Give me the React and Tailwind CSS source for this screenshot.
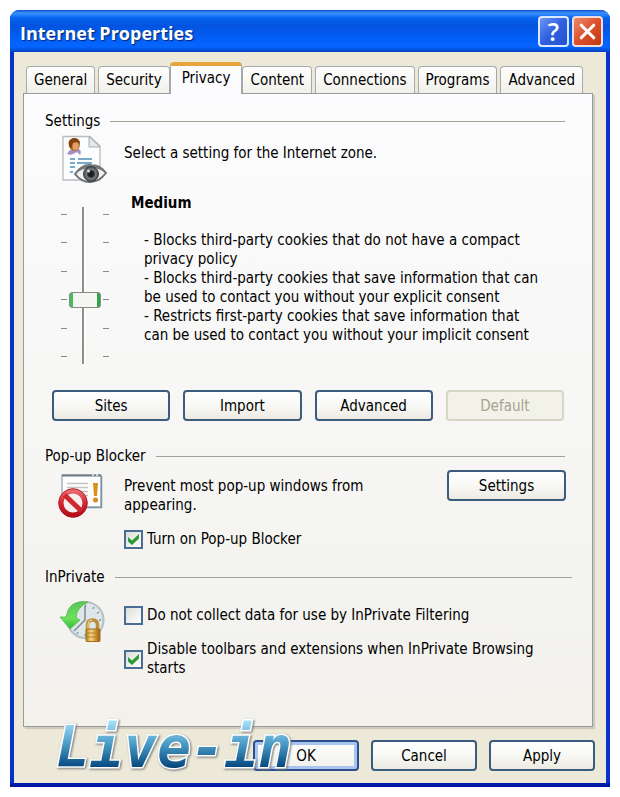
import { useState } from "react";
import { X } from "lucide-react";

const tabs = ["General", "Security", "Privacy", "Content", "Connections", "Programs", "Advanced"];

const ticks = [0, 1, 2, 3, 4, 5];

function XpButton({ children, className = "", isDefault, ...props }) {
  return (
    <button
      type="button"
      className={`h-[31px] rounded-[4px] border-2 text-center leading-5 disabled:border-[#d6d5c6] disabled:bg-none disabled:bg-[#f3f2e8] disabled:text-[#a5a493] ${
        isDefault
          ? "border-[#2c4f8c] bg-linear-to-b from-white to-[#f0f0ea] shadow-[inset_0_0_0_3px_#a9c4f0]"
          : "border-[#3b5c7c] bg-linear-to-b from-white via-[#f8f8f5] to-[#eceae2]"
      } ${className}`}
      {...props}
    >
      {children}
    </button>
  );
}

function GroupTitle({ children, className = "" }) {
  return (
    <div className={`flex items-center gap-[10px] ${className}`}>
      <h2 className="leading-5">{children}</h2>
      <div className="h-px flex-1 bg-[#a3a297]" />
    </div>
  );
}

function CheckRow({ id, checked, onChange, className = "", children }) {
  return (
    <div className={`flex items-center gap-1 ${className}`}>
      <span className="grid shrink-0">
        <input
          id={id}
          type="checkbox"
          checked={checked}
          onChange={onChange}
          className="peer col-start-1 row-start-1 size-[19px] appearance-none border-2 border-[#4a6d96] bg-linear-to-br from-[#dcdcd7] to-white"
        />
        <svg
          viewBox="0 0 19 19"
          className="pointer-events-none invisible col-start-1 row-start-1 size-[19px] peer-checked:visible"
        >
          <path d="M4 7 L8 10.500 L15 4 V8.500 L8 15 L4 11.500 Z" fill="#2b9b35" />
        </svg>
      </span>
      <label htmlFor={id} className="leading-[19px]">
        {children}
      </label>
    </div>
  );
}

function PrivacyIcon() {
  return (
    <svg viewBox="0 0 46 49" className="h-[49px] w-[46px]" aria-hidden="true">
      <defs>
        <radialGradient id="iris">
          <stop offset="0" stopColor="#111" />
          <stop offset="0.45" stopColor="#2b2d2f" />
          <stop offset="0.6" stopColor="#7b7f82" />
          <stop offset="1" stopColor="#44484b" />
        </radialGradient>
      </defs>
      <path d="M2 1.500 H29 L39 11 V45 H2 Z" fill="#fcfdfe" stroke="#b9bcc1" strokeWidth="1.300" />
      <path d="M28 1.500 V12 H39 Z" fill="#e5e7e9" stroke="#a9acb0" />
      <path d="M6 19 Q8 15 11 14 L18 14 Q21 16 19 20 Q16 16 14 18 Q10 21 6 19 Z" fill="#a78fc4" />
      <ellipse cx="13.500" cy="9.500" rx="5.500" ry="6.500" fill="#b0702c" />
      <ellipse cx="14.500" cy="11" rx="3" ry="4" fill="#dfa168" />
      <path d="M8 11 Q6 4 13 3 Q19 3 19 9 L16 7 L12 8 L10 14 Z" fill="#84400f" />
      <path
        d="M9 24 H14 M17 24 H31 M9 28 H14 M16 28 H31 M9 32 H14 M9 37 H12"
        stroke="#4e8dbd"
        strokeWidth="1.500"
      />
      <path d="M14 39 Q21 29 30 30 Q39 30 45 38 Q38 47 29 47 Q20 47 14 39 Z" fill="#f1f1ef" stroke="#6b6e70" strokeWidth="2" />
      <path d="M14 39 Q21 29 30 30 Q39 30 45 38 Q38 33 30 33 Q21 33 14 39 Z" fill="#777a7b" />
      <circle cx="30" cy="39" r="7.500" fill="url(#iris)" stroke="#3c3f41" />
      <circle cx="27.500" cy="36" r="1.500" fill="#d7dbdd" />
    </svg>
  );
}

function PopupIcon() {
  return (
    <svg viewBox="0 0 46 44" className="h-[44px] w-[46px]" aria-hidden="true">
      <defs>
        <linearGradient id="ban" x1="0" y1="0" x2="0" y2="1">
          <stop offset="0" stopColor="#e86a6e" />
          <stop offset="0.5" stopColor="#d42730" />
          <stop offset="1" stopColor="#b50d18" />
        </linearGradient>
      </defs>
      <rect x="4" y="1" width="39" height="32" fill="#fdfdfc" stroke="#a7b1bd" strokeWidth="1.500" />
      <path d="M4 1.500 H43" stroke="#6f7a87" strokeWidth="2" />
      <path d="M34 1 H36 M38 1 H40" stroke="#e8edf2" strokeWidth="1.500" />
      <path d="M43.500 2 V33.500 H26" fill="none" stroke="#7d92a5" strokeWidth="1.500" />
      <path d="M9 9.500 H30 M9 13.500 H30 M9 17.500 H30 M22 21.500 H30" stroke="#c3c4c5" strokeWidth="1.300" />
      <path d="M35 9 H40 L39 22 H36 Z" fill="#dc8d20" />
      <circle cx="37.500" cy="26" r="2.500" fill="#d88921" />
      <circle cx="15" cy="29" r="12" fill="#f5efee" stroke="url(#ban)" strokeWidth="5" />
      <path d="M6.500 21 L23.500 37" stroke="#cf2630" strokeWidth="5" />
      <circle cx="15" cy="29" r="14.300" fill="none" stroke="#a31822" strokeWidth="0.800" />
    </svg>
  );
}

function InPrivateIcon() {
  return (
    <svg viewBox="0 0 48 44" className="h-[44px] w-[48px]" aria-hidden="true">
      <defs>
        <linearGradient id="arrow" x1="0" y1="0" x2="0" y2="1">
          <stop offset="0" stopColor="#5dc35a" />
          <stop offset="0.6" stopColor="#6be35b" />
          <stop offset="1" stopColor="#38b53b" />
        </linearGradient>
        <linearGradient id="brass" x1="0" y1="0" x2="1" y2="0">
          <stop offset="0" stopColor="#b27a1b" />
          <stop offset="0.35" stopColor="#f5d888" />
          <stop offset="0.7" stopColor="#cf9230" />
          <stop offset="1" stopColor="#96620f" />
        </linearGradient>
      </defs>
      <circle cx="26.500" cy="20" r="18" fill="#dfe6ea" stroke="#b4bfc6" strokeWidth="2" />
      <path d="M26 6 V20 L15 31" fill="none" stroke="#7c8a93" strokeWidth="1.500" />
      <path
        d="M26.500 4.500 V7 M35 7 L34 9 M40 12 L38 13.500 M42 20 H40 M18 34 L19 32 M26 36 V34"
        stroke="#7d929f"
        strokeWidth="1.300"
      />
      <path
        d="M29 2 Q10 -1 7 17 L1 17 L11 29 L21 20 L17 18 Q17 8 29 2 Z"
        fill="url(#arrow)"
        stroke="#55b94f"
        strokeWidth="0.800"
      />
      <path d="M28.500 30 V25 Q28.500 20 33.500 20 Q38.500 20 38.500 25 V30" fill="none" stroke="#b98e36" strokeWidth="3.500" />
      <path d="M29 30 V25 Q29 20 33.500 20" fill="none" stroke="#efd99b" strokeWidth="1.200" />
      <rect x="27" y="29" width="14" height="12.500" rx="1" fill="url(#brass)" stroke="#a16d19" />
      <path d="M27 33 H41 M27 37 H41" stroke="#a87826" strokeWidth="0.800" />
    </svg>
  );
}

function TickColumn() {
  return (
    <div className="flex flex-col justify-between py-[7px]">
      {ticks.map((t) => (
        <span key={t} className="h-px w-[6px] bg-[#8b8b84]" />
      ))}
    </div>
  );
}

function LevelSlider({ level, onChange }) {
  return (
    <div className="flex h-[157px] gap-[2px]">
      <TickColumn />
      <input
        type="range"
        min="0"
        max="5"
        value={level}
        onChange={onChange}
        aria-label="Privacy level"
        className="m-0 h-[157px] w-[32px] appearance-none bg-transparent bg-[linear-gradient(90deg,#8f8f89_50%,#fff_50%)] bg-[length:4px_100%] bg-[position:13px_0px] bg-no-repeat [direction:rtl] [writing-mode:vertical-lr] [&::-webkit-slider-thumb]:h-[16px] [&::-webkit-slider-thumb]:w-[32px] [&::-webkit-slider-thumb]:appearance-none [&::-webkit-slider-thumb]:rounded-[3px] [&::-webkit-slider-thumb]:border [&::-webkit-slider-thumb]:border-[#858f88] [&::-webkit-slider-thumb]:bg-[linear-gradient(90deg,#46bc5c_3px,#f5f5f1_3px,#f5f5f1_27px,#2fa545_27px)]"
      />
      <TickColumn />
    </div>
  );
}

function Watermark() {
  return (
    <svg
      viewBox="0 0 270 80"
      className="pointer-events-none absolute bottom-[2px] left-[40px] h-[80px] w-[270px] overflow-visible"
    >
      <defs>
        <linearGradient id="ink" gradientUnits="userSpaceOnUse" x1="0" y1="16" x2="0" y2="62">
          <stop offset="0" stopColor="#a5e0f7" />
          <stop offset="0.5" stopColor="#4a9bc6" />
          <stop offset="1" stopColor="#07497f" />
        </linearGradient>
      </defs>
      <text
        x="6"
        y="62"
        fill="url(#ink)"
        stroke="#fff"
        strokeWidth="3"
        paintOrder="stroke"
        className="[font-family:'DejaVu_Sans_Mono',monospace] text-[56px] font-bold italic drop-shadow-[1px_1px_1px_#777]"
      >
        Live-in
      </text>
    </svg>
  );
}

export default function App() {
  const [activeTab, setActiveTab] = useState("Privacy");
  const [level, setLevel] = useState(2);
  const [popupBlocker, setPopupBlocker] = useState(true);
  const [noCollect, setNoCollect] = useState(false);
  const [disableToolbars, setDisableToolbars] = useState(true);

  return (
    <div className="min-h-screen bg-white p-[10px] text-[15px] text-black [font-family:'DejaVu_Sans_Condensed','DejaVu_Sans',sans-serif]">
      <div className="relative rounded-t-[9px] bg-[#0733c8]">
        {/* title bar */}
        <header className="flex h-[42px] items-center justify-between rounded-t-[9px] bg-[linear-gradient(180deg,#0a50c8_0px,#3c93ff_3px,#0762ee_8px,#0353e0_16px,#0361fa_30px,#0566ff_37px,#0440bd_42px)] pr-[7px] pl-[10px]">
          <h1 className="pt-[3px] text-[18px] leading-6 font-bold text-white [font-family:'Open_Sans',sans-serif] text-shadow-[1px_1px_1px_#0a246a]">
            Internet Properties
          </h1>
          <div className="flex gap-[3px]">
            <button
              type="button"
              aria-label="Help"
              className="flex size-[31px] items-center justify-center rounded-[4px] border-2 border-[#dce8ff] bg-linear-to-br from-[#6c96f4] via-[#2f5fdf] to-[#2352d2] text-[25px] leading-none font-semibold text-white [font-family:'Open_Sans',sans-serif]"
            >
              ?
            </button>
            <button
              type="button"
              aria-label="Close"
              className="flex size-[31px] items-center justify-center rounded-[4px] border-2 border-[#f3dcda] bg-linear-to-br from-[#ea8a6c] via-[#dc4f29] to-[#c03a14] text-white"
            >
              <X size={25} strokeWidth={3} />
            </button>
          </div>
        </header>

        <div className="mr-[4px] ml-[4px] bg-[#ece9d8] pt-[10px] pr-[13px] pb-[12px] pl-[9px]">
          <div role="tablist" className="flex items-end gap-[3px] pl-[3px]">
            {tabs.map((tab) => (
              <button
                key={tab}
                type="button"
                role="tab"
                aria-selected={activeTab === tab}
                onClick={() => setActiveTab(tab)}
                className={
                  activeTab === tab
                    ? "z-10 -mx-[3px] -mb-px h-[32px] rounded-t-[4px] border-x border-t-4 border-x-[#a5a9a9] border-t-[#e8a33d] bg-[#fcfcfe] px-[11px] pb-[4px]"
                    : "h-[27px] rounded-t-[4px] border border-b-0 border-[#a5a9a9] bg-linear-to-b from-white to-[#f1f0ea] px-[7px]"
                }
              >
                {tab}
              </button>
            ))}
          </div>

          <main className="border border-[#989b9c] bg-linear-to-b from-[#fcfcfe] to-[#f2f1ec] pt-[17px] pr-[20px] pb-[48px] pl-[21px] shadow-[2px_2px_1px_#cfccbd]">
            <GroupTitle className="pr-[7px]">Settings</GroupTitle>

            <div className="mt-[4px] flex items-center pl-[16px]">
              <PrivacyIcon />
              <p className="ml-[17px] pb-[14px] leading-5">Select a setting for the Internet zone.</p>
            </div>

            <div className="mt-[9px] flex items-start pl-[16px]">
              <div className="mt-[14px]">
                <LevelSlider level={level} onChange={(e) => setLevel(Number(e.target.value))} />
              </div>
              <div className="ml-[22px]">
                <h3 className="leading-5 font-bold">Medium</h3>
                <p className="mt-[18px] ml-[13px] leading-[19px]">
                  - Blocks third-party cookies that do not have a compact
                  <br />
                  privacy policy
                  <br />
                  - Blocks third-party cookies that save information that can
                  <br />
                  be used to contact you without your explicit consent
                  <br />
                  - Restricts first-party cookies that save information that
                  <br />
                  can be used to contact you without your implicit consent
                </p>
              </div>
            </div>

            <div className="mt-[26px] flex gap-[13px] pr-[8px] pl-[7px]">
              <XpButton className="flex-1">Sites</XpButton>
              <XpButton className="flex-1">Import</XpButton>
              <XpButton className="flex-1">Advanced</XpButton>
              <XpButton className="flex-1" disabled>
                Default
              </XpButton>
            </div>

            <GroupTitle className="mt-[25px] pr-[7px]">Pop-up Blocker</GroupTitle>
            <div className="mt-[4px] flex items-start pr-[6px] pl-[13px]">
              <div className="mt-[4px]">
                <PopupIcon />
              </div>
              <p className="mt-[7px] ml-[20px] flex-1 leading-[19px]">
                Prevent most pop-up windows from
                <br />
                appearing.
              </p>
              <XpButton className="w-[119px]">Settings</XpButton>
            </div>
            <CheckRow
              id="popup-blocker"
              className="mt-[12px] ml-[79px]"
              checked={popupBlocker}
              onChange={(e) => setPopupBlocker(e.target.checked)}
            >
              Turn on Pop-up Blocker
            </CheckRow>

            <GroupTitle className="mt-[18px]">InPrivate</GroupTitle>
            <div className="mt-[13px] flex items-start pl-[14px]">
              <InPrivateIcon />
              <div className="mt-[6px] ml-[17px]">
                <CheckRow id="no-collect" checked={noCollect} onChange={(e) => setNoCollect(e.target.checked)}>
                  Do not collect data for use by InPrivate Filtering
                </CheckRow>
                <CheckRow
                  id="disable-toolbars"
                  className="mt-[15px]"
                  checked={disableToolbars}
                  onChange={(e) => setDisableToolbars(e.target.checked)}
                >
                  Disable toolbars and extensions when InPrivate Browsing
                  <br />
                  starts
                </CheckRow>
              </div>
            </div>
          </main>

          <footer className="-mr-[2px] mt-[13px] flex justify-end gap-[12px]">
            <XpButton className="w-[106px]" isDefault>
              OK
            </XpButton>
            <XpButton className="w-[106px]">Cancel</XpButton>
            <XpButton className="w-[106px]">Apply</XpButton>
          </footer>
        </div>
        <div className="h-[4px] bg-[#0019a8]" />

        <Watermark />
      </div>
    </div>
  );
}
